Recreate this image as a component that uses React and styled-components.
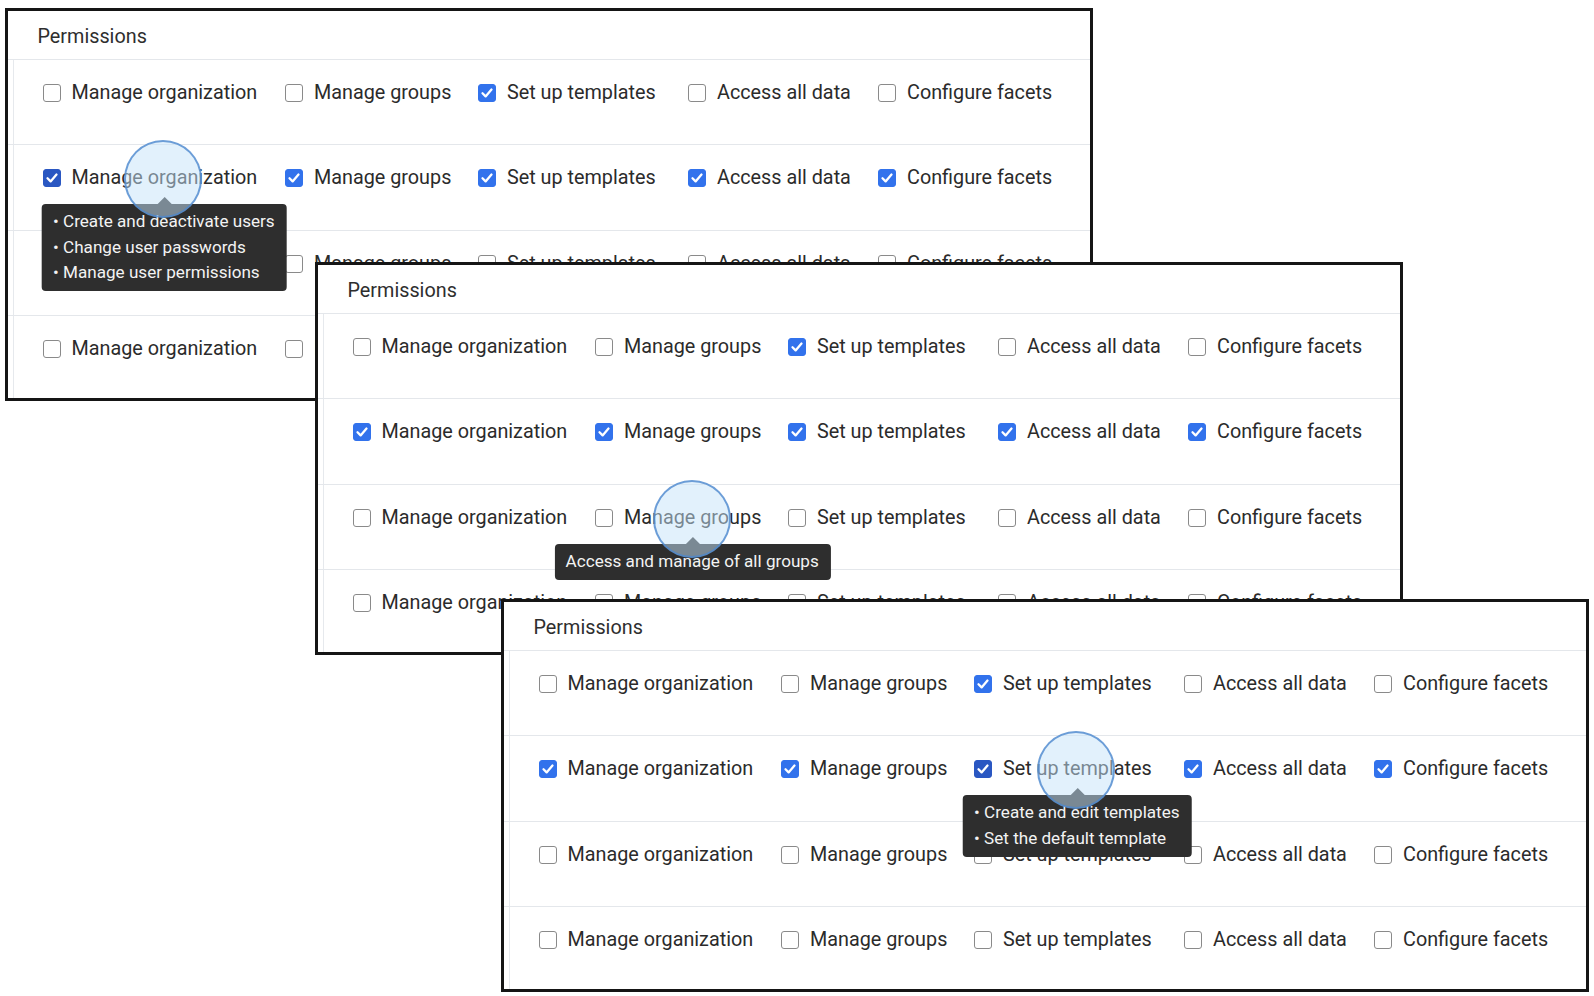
import React from "react";
import styled, { createGlobalStyle } from "styled-components";

const GlobalStyle = createGlobalStyle`
  html, body {
    margin: 0;
    padding: 0;
    background: #ffffff;
  }
  body {
    font-family: Roboto, "Liberation Sans", Arial, sans-serif;
    -webkit-font-smoothing: antialiased;
  }
`;

const labels = [
  "Manage organization",
  "Manage groups",
  "Set up templates",
  "Access all data",
  "Configure facets",
];

const rows = [
  [false, false, true, false, false],
  [true, true, true, true, true],
  [false, false, false, false, false],
  [false, false, false, false, false],
];

const shots = [
  {
    left: 5,
    top: 8,
    hover: {
      row: 1,
      col: 0,
      tip: [
        "• Create and deactivate users",
        "• Change user passwords",
        "• Manage user permissions",
      ],
    },
  },
  {
    left: 315,
    top: 262,
    hover: { row: 2, col: 1, tip: ["Access and manage of all groups"] },
  },
  {
    left: 501,
    top: 599,
    hover: {
      row: 1,
      col: 2,
      tip: ["• Create and edit templates", "• Set the default template"],
    },
  },
];

const Check = () => (
  <svg width="14" height="14" viewBox="0 0 14 14" fill="none">
    <path
      d="M2.5 7.3 L5.6 10.4 L11.5 3.5"
      stroke="#ffffff"
      strokeWidth="2.3"
      strokeLinecap="round"
      strokeLinejoin="round"
    />
  </svg>
);

const App = () => {
  return (
    <>
      <GlobalStyle />
      <Stage>
        {shots.map((shot, i) => (
          <Panel key={i} $left={shot.left} $top={shot.top}>
            <Header>Permissions</Header>
            <Body>
              {rows.map((row, r) => (
                <Row key={r}>
                  {row.map((checked, c) => {
                    const hovered = shot.hover.row === r && shot.hover.col === c;
                    return (
                      <Item key={c}>
                        <Box $checked={checked} $hovered={hovered}>
                          {checked && <Check />}
                        </Box>
                        <Label>
                          {labels[c]}
                          {hovered && (
                            <>
                              <Tooltip>
                                {shot.hover.tip.map((line) => (
                                  <div key={line}>{line}</div>
                                ))}
                              </Tooltip>
                              <Pointer />
                            </>
                          )}
                        </Label>
                      </Item>
                    );
                  })}
                </Row>
              ))}
            </Body>
          </Panel>
        ))}
      </Stage>
    </>
  );
};

const Stage = styled.main`
  position: relative;
  width: 1594px;
  height: 996px;
  overflow: hidden;
  background: #ffffff;
`;

const Panel = styled.section`
  position: absolute;
  left: ${({ $left }) => $left}px;
  top: ${({ $top }) => $top}px;
  width: 1088px;
  height: 393px;
  box-sizing: border-box;
  border: 3px solid #151515;
  background: #ffffff;
  overflow: hidden;
`;

const Header = styled.header`
  display: flex;
  align-items: center;
  height: 49px;
  box-sizing: border-box;
  padding: 3px 0 0 29.5px;
  border-bottom: 1px solid #e4e7eb;
  font-size: 19.8px;
  color: #2e2e2e;
`;

const Body = styled.div`
  background: linear-gradient(#e6e9ed, #e6e9ed) 5px 0 / 1px 100% no-repeat;
`;

const Row = styled.div`
  display: grid;
  grid-template-columns: 242.5px 193px 210px 190px 1fr;
  align-items: start;
  height: 85.4px;
  box-sizing: border-box;
  padding: 21px 0 0 34.5px;
  border-bottom: 1px solid #e4e7eb;
`;

const Item = styled.div`
  display: flex;
  align-items: center;
  gap: 11px;
  height: 24px;
`;

const Box = styled.span`
  display: flex;
  align-items: center;
  justify-content: center;
  flex: none;
  width: 18px;
  height: 18px;
  box-sizing: border-box;
  border-radius: 3px;
  border: 1.6px solid
    ${({ $checked, $hovered }) =>
      $checked ? ($hovered ? "#2a57c2" : "#3272ec") : "#8a8a8a"};
  background: ${({ $checked, $hovered }) =>
    $checked ? ($hovered ? "#2a57c2" : "#3272ec") : "#ffffff"};
`;

const Label = styled.span`
  position: relative;
  font-size: 19.8px;
  line-height: 24px;
  color: #2b2b2b;
  white-space: nowrap;
`;

const Tooltip = styled.div`
  position: absolute;
  top: 38px;
  left: 50%;
  transform: translateX(-50%);
  z-index: 2;
  padding: 5px 12px 5.5px 11px;
  border-radius: 4px;
  background: #2e2e2e;
  color: #f3f3f3;
  font-size: 17.1px;
  line-height: 25.4px;
  white-space: nowrap;

  &::before {
    content: "";
    position: absolute;
    top: -7px;
    left: 50%;
    margin-left: -7px;
    border-left: 7px solid transparent;
    border-right: 7px solid transparent;
    border-bottom: 7px solid #2e2e2e;
  }
`;

const Pointer = styled.span`
  position: absolute;
  left: 50%;
  top: 50%;
  z-index: 3;
  width: 78px;
  height: 78px;
  box-sizing: border-box;
  margin: -38px 0 0 -40px;
  border-radius: 50%;
  border: 2px solid rgba(78, 136, 206, 0.8);
  background: rgba(198, 228, 250, 0.5);
  pointer-events: none;
`;

export default App;
